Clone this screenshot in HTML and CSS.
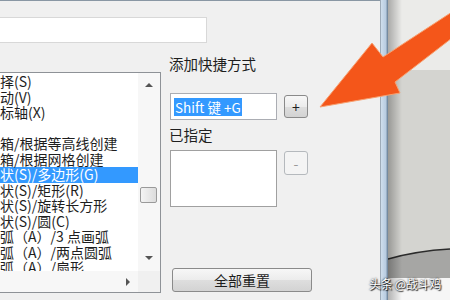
FILE: index.html
```html
<!DOCTYPE html>
<html lang="zh-CN">
<head>
    <meta charset="UTF-8">
    <title>自定义快捷键</title>
    <link rel="stylesheet" href="styles.css">
</head>
<body>
    <div class="screen">
        <div class="dialog">
            <div class="search">
                <div class="search-box"></div>
            </div>
            <div class="main">
                <div class="list">
                    <div class="list-top">
                        <ul class="items">
                            <li>择(S)</li>
                            <li>动(V)</li>
                            <li>标轴(X)</li>
                            <li>&nbsp;</li>
                            <li>箱/根据等高线创建</li>
                            <li>箱/根据网格创建</li>
                            <li class="selected">状(S)/多边形(G)</li>
                            <li>状(S)/矩形(R)</li>
                            <li>状(S)/旋转长方形</li>
                            <li>状(S)/圆(C)</li>
                            <li>弧（A）/3 点画弧</li>
                            <li>弧（A）/两点圆弧</li>
                            <li>弧（A）/扇形</li>
                        </ul>
                        <div class="vscroll">
                            <span class="arrow-up"></span>
                            <div class="track"><div class="thumb"></div></div>
                            <span class="arrow-down"></span>
                        </div>
                    </div>
                    <div class="list-bottom">
                        <div class="hscroll"><span class="arrow-right"></span></div>
                        <div class="corner"></div>
                    </div>
                </div>

                <div class="side">
                    <div class="label">添加快捷方式</div>
                    <div class="key-row">
                        <div class="key-input"><span class="sel">Shift 键 +G</span></div>
                        <button class="btn btn-small">+</button>
                    </div>
                    <div class="label assigned-label">已指定</div>
                    <div class="assigned-row">
                        <div class="assigned-box"></div>
                        <button class="btn btn-small btn-off">-</button>
                    </div>
                    <button class="btn btn-reset">全部重置</button>
                </div>
            </div>
        </div>

        <div class="frame"></div>

        <div class="backdrop">
            <svg width="62" height="300" viewBox="0 0 62 300">
                <defs>
                    <linearGradient id="shade" x1="0" x2="1" y1="0" y2="0">
                        <stop offset="0" stop-color="#000" stop-opacity="0.28"/>
                        <stop offset="1" stop-color="#000" stop-opacity="0"/>
                    </linearGradient>
                </defs>
                <rect x="0" y="0" width="62" height="70" fill="#ebebe9"/>
                <rect x="0" y="70" width="62" height="200" fill="#d4d4d0"/>
                <path d="M0 259 Q28 251 62 249 L62 278 L0 278 Z" fill="#a6a6a4"/>
                <path d="M0 259 Q28 251 62 249" fill="none" stroke="#2b2b2b" stroke-width="1.5"/>
                <rect x="0" y="278" width="62" height="22" fill="#f6f6f6"/>
                <rect x="0" y="0" width="14" height="300" fill="url(#shade)"/>
            </svg>
        </div>

        <!-- 橙色指示箭头 -->
        <svg class="pointer" width="450" height="300" viewBox="0 0 450 300">
            <polygon points="320,107 372,43 383,57 452,12 452,38 395,82 400,93"
                     fill="#f4561a" stroke="#f7a070" stroke-width="1" stroke-linejoin="round"/>
        </svg>

        <div class="watermark">头条 @战斗鸡</div>
    </div>
</body>
</html>
```

FILE: styles.css
```css
body {
    margin: 0;
    font-family: "Noto Sans CJK SC", "Noto Sans", sans-serif;
    color: #1e1e1e;
    overflow: hidden;
}
.screen {
    position: relative;
    display: flex;
    width: 450px;
    height: 300px;
    overflow: hidden;
}
.dialog {
    width: 380px;
    height: 300px;
    flex-shrink: 0;
    background: #f0f0f0;
    border-top: 1px solid #8997a4;
    box-sizing: border-box;
}
.search {
    padding-top: 16px;
}
.search-box {
    width: 207px;
    height: 26px;
    background: #fff;
    border: 1px solid #d8d8d8;
    border-left: none;
    box-sizing: border-box;
}
.main {
    display: flex;
    margin-top: 12px;
}
.list {
    width: 161px;
    height: 221px;
    margin-top: 17px;
    background: #fff;
    border: 1px solid #8e9297;
    border-left: none;
    box-sizing: border-box;
}
.list-top {
    display: flex;
    height: 198px;
}
.items {
    width: 138px;
    margin: 0;
    padding: 1px 0 0;
    list-style: none;
    font-size: 14px;
    line-height: 15.5px;
    overflow: hidden;
    white-space: nowrap;
}
.items li {
    height: 15.5px;
}
.items .selected {
    background: #3399ff;
    color: #fff;
}
.vscroll {
    width: 22px;
    display: flex;
    flex-direction: column;
    align-items: center;
    background: #f7f7f7;
}
.arrow-up, .arrow-down {
    display: block;
    width: 0;
    height: 0;
    border-left: 4px solid transparent;
    border-right: 4px solid transparent;
}
.arrow-up {
    margin-top: 10px;
    border-bottom: 4px solid #555;
}
.arrow-down {
    margin-bottom: 11px;
    border-top: 4px solid #555;
}
.track {
    flex: 1;
    width: 100%;
}
.thumb {
    width: 17px;
    height: 16px;
    margin: 100px 0 0 2px;
    border: 1px solid #9a9a9a;
    border-radius: 2px;
    background: linear-gradient(to right, #f4f4f4, #dcdcdc);
    box-sizing: border-box;
}
.list-bottom {
    display: flex;
    height: 21px;
}
.hscroll {
    width: 138px;
    display: flex;
    align-items: center;
    justify-content: flex-end;
    background: #f7f7f7;
}
.arrow-right {
    display: block;
    width: 0;
    height: 0;
    margin-right: 8px;
    border-top: 4px solid transparent;
    border-bottom: 4px solid transparent;
    border-left: 4px solid #555;
}
.corner {
    width: 22px;
    background: #f0f0f0;
}
.side {
    margin-left: 9px;
}
.label {
    font-size: 14.5px;
    line-height: 18px;
    height: 18px;
    margin-left: -1px;
}
.key-row {
    display: flex;
    align-items: center;
    margin-top: 20px;
}
.key-input {
    width: 107px;
    height: 27px;
    display: flex;
    align-items: center;
    padding-left: 3px;
    background: #fff;
    border: 1px solid #abadb3;
    box-sizing: border-box;
    font-size: 13.5px;
}
.sel {
    background: #3399ff;
    color: #fff;
    line-height: 18px;
    padding: 0 1px;
}
.btn {
    font-family: inherit;
    color: #1e1e1e;
    border: 1px solid #8a8a8a;
    border-radius: 3px;
    background: linear-gradient(#f7f7f7, #ececec 50%, #dedede 51%, #d3d3d3);
    padding: 0;
    box-sizing: border-box;
}
.btn-small {
    width: 24px;
    height: 23px;
    margin-left: 7px;
    font-size: 14px;
    line-height: 20px;
}
.btn-off {
    height: 24px;
    margin-top: 1px;
    color: #9a9a9a;
    border-color: #b5b9bd;
    background: #f4f4f4;
}
.assigned-label {
    margin-top: 6px;
}
.assigned-row {
    display: flex;
    align-items: flex-start;
    margin-top: 6px;
}
.assigned-box {
    width: 107px;
    height: 57px;
    background: #fff;
    border: 1px solid #a0a0a0;
    box-sizing: border-box;
}
.btn-reset {
    display: block;
    width: 140px;
    height: 24px;
    margin: 61px 0 0 2px;
    font-size: 14px;
    line-height: 20px;
}
.frame {
    width: 8px;
    flex-shrink: 0;
    background: linear-gradient(to right, #9eabb8 0, #9eabb8 1px, #cfdeec 1px, #b7cbe0 6px, #7f95ab 7px, #6a7f94 8px);
}
.backdrop {
    flex: 1;
    height: 300px;
}
.backdrop svg {
    display: block;
}
.pointer {
    position: absolute;
    left: 0;
    top: 0;
}
.watermark {
    position: absolute;
    left: 369px;
    top: 276px;
    font-size: 12px;
    line-height: 15px;
    color: #fff;
    letter-spacing: -0.3px;
    text-shadow: 0 0 2px #000, 1px 1px 1px #222;
}
```
